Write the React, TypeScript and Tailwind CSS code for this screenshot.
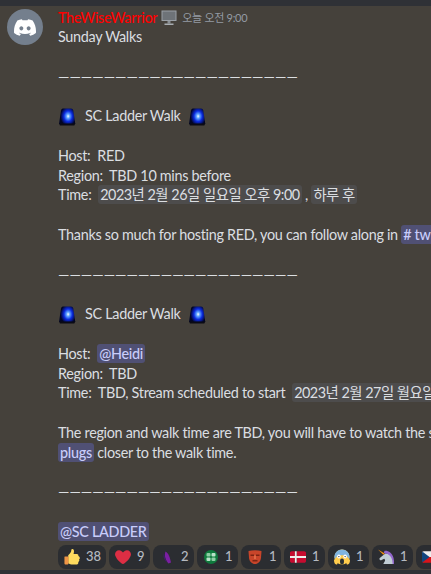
import React from "react";

const Siren = () => (
  <svg width="18" height="18" viewBox="0 0 18 18" className="inline-block align-[-4.500px] shrink-0">
    <defs>
      <radialGradient id="sirenGlow" cx="0.56" cy="0.5" r="0.62" gradientTransform="translate(0.14 0) scale(0.75 1)">
        <stop offset="0" stopColor="#ffffff" />
        <stop offset="0.22" stopColor="#62a8ff" />
        <stop offset="0.55" stopColor="#0b2ce0" />
        <stop offset="0.85" stopColor="#04106a" />
        <stop offset="1" stopColor="#020624" />
      </radialGradient>
    </defs>
    <path d="M3 2.500C3.300 1 4.200.5 5.500.5h7.500c1.200 0 2 .7 2.300 2l2 13.500H1z" fill="url(#sirenGlow)" />
    <path d="M1 15.500h16.300l-1 2H2z" fill="#0a0a14" />
  </svg>
);

const Thumb = () => (
  <svg width="16" height="16" viewBox="0 0 36 36">
    <path fill="#FFDB5E" d="M34.900 19c0-1.700-1-3-2.700-3.300.8-2.700-.6-4.700-3.700-4.700h-7c.6-2 1-4 1-6 0-3-1.800-5-3.500-5C17.500 0 16.500 1 16.500 2.500c0 4-3 9-7 11.500V32c3 1.500 6 3 10 3h8c3 0 4.800-1.500 4.800-4 0-.8-.2-1.300-.4-1.800 1.500-.6 2.600-2 2.600-3.700 0-.9-.3-1.600-.6-2.200 1.200-.7 2-2.300 2-4.300z" />
    <path fill="#EE9547" d="M2 17h6c1 0 2 1 2 2v13c0 1.500-1 3-3 3H4c-2 0-3-1.500-3-3V18c0-.5.500-1 1-1z" />
  </svg>
);

const Heart = () => (
  <svg width="16" height="16" viewBox="0 0 36 36">
    <path fill="#DD2E44" d="M35.900 11.800c0-5-4-9-9-9-3.500 0-6.900 2.200-8.900 5.200-2-3-5.400-5.200-8.900-5.200-5 0-9 4-9 9 0 1.400.3 2.800.9 4C4 24 13 32 18 34c5-2 14-10 17-18.200.6-1.200.9-2.600.9-4z" />
  </svg>
);

const Feather = () => (
  <svg width="16" height="16" viewBox="0 0 16 16">
    <path fill="#7b1fa2" d="M6.500 2.500c3 1.500 4.500 6 5.500 11l-2.500 1C6.500 11 5 6.500 6.500 2.500z" />
    <path fill="#3f1d6b" d="M5 4c-1 3-.5 5.500 1.500 8l1.500 2C6.500 10.500 5.500 7.500 5 4z" />
  </svg>
);

const Green = () => (
  <svg width="16" height="16" viewBox="0 0 16 16">
    <circle cx="8" cy="8" r="7" fill="#0f7a3d" />
    <rect x="3.500" y="4" width="4" height="3.500" rx="1" fill="#8fcfa6" />
    <rect x="8.500" y="4" width="4" height="3.500" rx="1" fill="#b8e2c8" />
    <rect x="3.500" y="8.500" width="4" height="3.500" rx="1" fill="#b8e2c8" />
    <rect x="8.500" y="8.500" width="4" height="3.500" rx="1" fill="#8fcfa6" />
  </svg>
);

const Mask = () => (
  <svg width="16" height="16" viewBox="0 0 16 16">
    <path fill="#c8452a" d="M1.500 2c4-1 9-1 13 0l-.5 7c-.5 3.500-3 6-6 6s-5.500-2.500-6-6z" />
    <path fill="#7a2413" d="M3.500 5.500h3.500v1.500H3.500zM9 5.500h3.500v1.500H9zM5.500 11h5v1.500h-5z" />
    <path fill="#e8784f" d="M7.300 6.500h1.400v3.500H7.300z" />
  </svg>
);

const Flag = () => (
  <svg width="16" height="16" viewBox="0 0 36 36">
    <path fill="#C60C30" d="M32 5H15v11h21V9c0-2.200-1.800-4-4-4zM15 31h17c2.200 0 4-1.800 4-4v-7H15zM0 20v7c0 2.200 1.800 4 4 4h7V20zM11 5H4C1.800 5 0 6.800 0 9v7h11z" />
    <path fill="#EEE" d="M15 5h-4v11H0v4h11v11h4V20h21v-4H15z" />
  </svg>
);

const Scream = () => (
  <svg width="16" height="16" viewBox="0 0 36 36">
    <circle cx="18" cy="18" r="17" fill="#FFCC4D" />
    <path fill="#7fb4e0" d="M18 1C8.600 1 1 8.600 1 18c0 1.500.2 3 .6 4.400C5 17 8 14 18 14s13 3 16.400 8.400c.4-1.400.6-2.900.6-4.400C35 8.600 27.400 1 18 1z" />
    <ellipse cx="11" cy="17" rx="4" ry="4.500" fill="#fff" />
    <ellipse cx="25" cy="17" rx="4" ry="4.500" fill="#fff" />
    <circle cx="11" cy="17" r="1.500" fill="#292F33" />
    <circle cx="25" cy="17" r="1.500" fill="#292F33" />
    <ellipse cx="18" cy="28" rx="4.500" ry="6.500" fill="#292F33" />
    <path fill="#FFCC4D" d="M0 26c0-3 3-4 5-3l3 6c1 2 0 6-3 6-3 0-5-5-5-9zM36 26c0-3-3-4-5-3l-3 6c-1 2 0 6 3 6 3 0 5-5 5-9z" />
  </svg>
);

const Unicorn = () => (
  <svg width="16" height="16" viewBox="0 0 36 36">
    <path fill="#C1CDD5" d="M36 34c0-11-6-22-16-24-2-.4-4 0-5 1L4 20c-1 1-1 3 0 4 1 1 3 2 4 1l6-3c1 1 2 2 2 3 0 3-3 6-4 9z" />
    <path fill="#9266CC" d="M15 4c7-1 17 4 20 16 .5 3 1 8 1 14h-3c0-12-4-20-14-24l-3 1-3-3z" />
    <path fill="#F4900C" d="M0 1l15 9-3 3z" />
  </svg>
);

const Czech = () => (
  <svg width="16" height="16" viewBox="0 0 36 36">
    <path fill="#EEE" d="M32 5H4C1.800 5 0 6.800 0 9v9h36V9c0-2.200-1.800-4-4-4z" />
    <path fill="#D7141A" d="M0 18v9c0 2.200 1.800 4 4 4h28c2.200 0 4-1.800 4-4v-9z" />
    <path fill="#11457E" d="M1.400 6C.5 6.700 0 7.800 0 9v18c0 1.200.5 2.300 1.400 3L17 18z" />
  </svg>
);

const Monitor = () => (
  <svg width="16" height="16" viewBox="0 0 16 16" className="shrink-0">
    <rect x="0.500" y="0.500" width="15" height="10.500" fill="#9aa0a6" />
    <rect x="1.500" y="1.500" width="13" height="8.500" fill="#6e7378" />
    <rect x="6.500" y="11" width="3" height="2.500" fill="#8b9095" />
    <rect x="3.500" y="13.500" width="9" height="1.500" fill="#a8adb2" />
  </svg>
);

const Mention = ({ children }: { children: React.ReactNode }) => (
  <span className="rounded-[3px] bg-[#505074] px-[2px] py-[1px] font-medium text-[#c9cdfb]">{children}</span>
);

const Chip = ({ children }: { children: React.ReactNode }) => (
  <span className="rounded-[3px] bg-[#4d4c4c] px-[2px] py-[1px] tracking-[-0.5px]">{children}</span>
);

const Line = ({ children }: { children?: React.ReactNode }) => (
  <div className="h-[19.8px] whitespace-pre">{children}</div>
);

const Rule = () => (
  <Line>
    <span className="tracking-normal">{"—".repeat(21)}</span>
  </Line>
);

const WalkTitle = () => (
  <Line>
    <span className="mr-[9px]"><Siren /></span>
    <span className="mr-[7px]">SC Ladder Walk</span>
    <Siren />
  </Line>
);

const reactions: [React.ReactNode, string, string][] = [
  [<Thumb />, "38", "w-[48px]"],
  [<Heart />, "9", "w-[41px]"],
  [<Feather />, "2", "w-[41px]"],
  [<Green />, "1", "w-[41px]"],
  [<Mask />, "1", "w-[40px]"],
  [<Flag />, "1", "w-[41px]"],
  [<Scream />, "1", "w-[41px]"],
  [<Unicorn />, "1", "w-[41px]"],
  [<Czech />, "1", "w-[41px]"],
];

export default function App() {
  return (
    <div className="flex h-[574px] w-[431px] flex-col overflow-hidden bg-[#45413b] font-['Lato','Noto_Sans_CJK_KR',sans-serif] text-[14.4px] leading-[19.8px] tracking-[-0.3px] text-[#dbdee1]">
      <div className="h-[6px] shrink-0 bg-[#2f3136]" />
      <div className="flex min-h-0 flex-1 gap-[15px] pl-[7px] pt-[3px]">
        <div className="flex h-[36px] w-[36px] shrink-0 items-center justify-center rounded-full bg-[#747f8d]">
          <svg width="22" height="17" viewBox="0 0 127.140 96.360" fill="#ffffff">
            <path d="M107.700 8.070A105.150 105.150 0 0 0 81.470 0a72.060 72.060 0 0 0-3.360 6.830 97.680 97.680 0 0 0-29.110 0A72.370 72.370 0 0 0 45.640 0a105.890 105.890 0 0 0-26.250 8.090C2.790 32.650-1.710 56.600.540 80.210a105.730 105.730 0 0 0 32.170 16.150 77.700 77.700 0 0 0 6.890-11.110 68.420 68.420 0 0 1-10.850-5.180c.91-.66 1.800-1.340 2.660-2a75.570 75.570 0 0 0 64.320 0c.87.710 1.760 1.390 2.660 2a68.680 68.680 0 0 1-10.870 5.190 77 77 0 0 0 6.890 11.100 105.250 105.250 0 0 0 32.190-16.140c2.640-27.380-4.510-51.110-18.900-72.150zM42.450 65.690C36.180 65.690 31 60 31 53s5-12.740 11.430-12.740S54 46 53.890 53s-5.050 12.690-11.440 12.690zm42.240 0C78.410 65.690 73.250 60 73.250 53s5-12.740 11.440-12.740S96.230 46 96.120 53s-5.040 12.690-11.430 12.690z" />
          </svg>
        </div>
        <div className="flex min-w-0 flex-1 flex-col whitespace-nowrap">
          <div className="flex h-[18px] items-center">
            <span className="font-medium text-[#ff0000]">TheWiseWarrior</span>
            <span className="ml-[4px]"><Monitor /></span>
            <span className="ml-[5px] text-[11px] text-[#949ba4]">오늘 오전 9:00</span>
          </div>
          <Line>Sunday Walks</Line>
          <Line />
          <Rule />
          <Line />
          <WalkTitle />
          <Line />
          <Line>Host:  RED</Line>
          <Line>Region:  TBD 10 mins before</Line>
          <Line>Time:  <Chip>2023년 2월 26일 일요일 오후 9:00</Chip> , <Chip>하루 후</Chip></Line>
          <Line />
          <Line>Thanks so much for hosting RED, you can follow along in <Mention># twitch</Mention></Line>
          <Line />
          <Rule />
          <Line />
          <WalkTitle />
          <Line />
          <Line>Host:  <Mention>@Heidi</Mention></Line>
          <Line>Region:  TBD</Line>
          <Line>Time:  TBD, Stream scheduled to start  <Chip>2023년 2월 27일 월요일 오후 9:00</Chip></Line>
          <Line />
          <Line>The region and walk time are TBD, you will have to watch the stream for updates from</Line>
          <Line><Mention>plugs</Mention> closer to the walk time.</Line>
          <Line />
          <Rule />
          <Line />
          <Line><Mention>@SC LADDER</Mention></Line>
          <div className="mt-[3px] flex gap-[3px]">
            {reactions.map(([icon, count, width], i) => (
              <div key={i} className={`flex h-[24px] shrink-0 items-center gap-[6px] rounded-[8px] bg-[#2b2d31] pl-[6px] ${width}`}>
                <span className="flex h-[16px] w-[16px] shrink-0 items-center justify-center">{icon}</span>
                <span className="text-[13px] font-medium tracking-normal text-[#b5bac1]">{count}</span>
              </div>
            ))}
          </div>
        </div>
      </div>
      <div className="h-[4px] shrink-0 bg-[#2f3136]" />
    </div>
  );
}
